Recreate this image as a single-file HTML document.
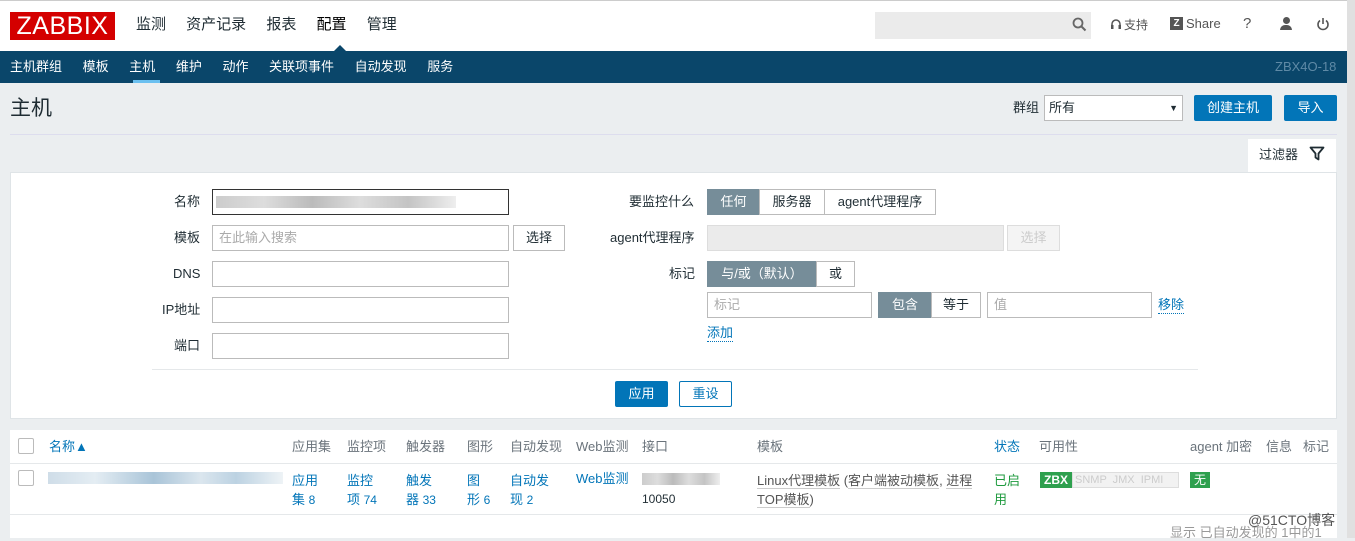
<!DOCTYPE html>
<html><head><meta charset="utf-8"><style>
*{margin:0;padding:0;box-sizing:border-box}
body{width:1355px;height:538px;overflow:hidden;background:#ebeef0;font-family:"Liberation Sans","Noto Sans CJK SC",sans-serif;font-size:13px;line-height:16px;color:#1f2c33;position:relative}
.a{position:absolute;white-space:nowrap}
.inp{position:absolute;background:#fff;border:1px solid #bbb;height:26px}
.btn{position:absolute;border:1px solid #bbb;background:#fff;height:26px;text-align:center;line-height:24px}
.blue{background:#0275b8;color:#fff;border:1px solid #0275b8;border-radius:2px;text-align:center;position:absolute;height:26px;line-height:24px}
.seg{position:absolute;height:26px;line-height:24px;text-align:center;border:1px solid #bbb;background:#fff}
.on{background:#768d99;color:#fff;border-color:#768d99}
.lnk{color:#0275b8}
.th{color:#6a737b}
.blur{position:absolute;height:12px;background:linear-gradient(90deg,#ccc,#ddd 20%,#bbb 40%,#ddd 60%,#c4c4c4 80%,#eee)}
</style></head><body>
<div class="a" style="left:0;top:0;width:1347px;height:51px;background:#fff;border-top:1px solid #ccc"></div>
<div class="a" style="left:1347px;top:0;width:8px;height:538px;background:#e0e0e0"></div>
<div class="a" style="left:10px;top:12px;width:105px;height:28px;background:#d40000;color:#fff;font-size:25px;line-height:28px;text-align:center;letter-spacing:0.5px;font-weight:300">ZABBIX</div>
<div class="a" style="left:136px;top:16px;font-size:15px;line-height:18px;color:#1f2c33;word-spacing:16px">监测 资产记录 报表 <span style="color:#000">配置</span> 管理</div>
<div class="a" style="left:875px;top:12px;width:216px;height:27px;background:#ebebeb"></div>
<svg class="a" style="left:1072px;top:17px" width="15" height="15" viewBox="0 0 15 15"><circle cx="6" cy="6" r="4.5" fill="none" stroke="#666" stroke-width="1.8"/><path d="M9.5 9.5L13.5 13.5" stroke="#666" stroke-width="2"/></svg>
<svg class="a" style="left:1110px;top:18px" width="12" height="12" viewBox="0 0 12 12"><path d="M2 8V6a4 4 0 0 1 8 0v2" fill="none" stroke="#555" stroke-width="1.5"/><rect x="1" y="7" width="2.5" height="4" fill="#555"/><rect x="8.5" y="7" width="2.5" height="4" fill="#555"/></svg>
<div class="a" style="left:1124px;top:17px;font-size:12px;color:#555">支持</div>
<div class="a" style="left:1170px;top:17px;width:13px;height:13px;background:#555;color:#fff;font-size:10px;text-align:center;line-height:13px;font-weight:bold">Z</div>
<div class="a" style="left:1186px;top:16px;font-size:13px;color:#555">Share</div>
<div class="a" style="left:1243px;top:16px;font-size:15px;color:#555">?</div>
<div class="a" style="left:1280px;top:17px;width:12px;height:14px"><div style="width:7px;height:7px;border-radius:50%;background:#555;margin:0 auto"></div><div style="width:12px;height:5px;background:#555;border-radius:5px 5px 0 0;margin-top:1px"></div></div>
<svg class="a" style="left:1316px;top:17px" width="14" height="14" viewBox="0 0 14 14"><path d="M4 3.5A5 5 0 1 0 10 3.5" fill="none" stroke="#555" stroke-width="1.6"/><path d="M7 1V7" stroke="#555" stroke-width="1.6"/></svg>
<div class="a" style="left:0;top:51px;width:1347px;height:32px;background:#0a466a"></div>
<div class="a" style="left:333px;top:45px;width:0;height:0;border-left:7px solid transparent;border-right:7px solid transparent;border-bottom:7px solid #0a466a"></div>
<div class="a" style="left:10px;top:59px;color:#fff;font-size:13px;word-spacing:17px">主机群组 模板 主机 维护 动作 关联项事件 自动发现 服务</div>
<div class="a" style="left:133px;top:80px;width:27px;height:3px;background:#6bc0f0"></div>
<div class="a" style="left:1275px;top:59px;color:#5f8aa6;font-size:13px">ZBX4O-18</div>
<div class="a" style="left:10px;top:96px;font-size:21px;line-height:26px;color:#1f2c33">主机</div>
<div class="a" style="left:1013px;top:100px">群组</div>
<div class="inp" style="left:1044px;top:95px;width:139px;height:26px;padding:4px 4px">所有<span style="float:right;font-size:9px">▼</span></div>
<div class="blue" style="left:1194px;top:95px;width:78px">创建主机</div>
<div class="blue" style="left:1284px;top:95px;width:53px">导入</div>
<div class="a" style="left:10px;top:134px;width:1327px;height:1px;background:#dde"></div>
<div class="a" style="left:1248px;top:139px;width:88px;height:34px;background:#fff;padding:8px 11px;font-size:13px">过滤器</div>
<svg class="a" style="left:1309px;top:146px" width="16" height="15" viewBox="0 0 16 15"><path d="M1.5 1.5H14.5L9.5 7.5V13.5L6.5 11.5V7.5Z" fill="none" stroke="#1f2c33" stroke-width="1.8" stroke-linejoin="round"/></svg>
<div class="a" style="left:10px;top:172px;width:1327px;height:247px;background:#fff;border:1px solid #dfe4e7"></div>
<div class="a" style="left:174px;top:194px">名称</div>
<div class="inp" style="left:212px;top:189px;width:297px;border-color:#333"></div>
<div class="blur" style="left:216px;top:196px;width:240px"></div>
<div class="a" style="left:174px;top:230px">模板</div>
<div class="inp" style="left:212px;top:225px;width:297px;color:#aaa;padding:4px 6px">在此输入搜索</div>
<div class="btn" style="left:513px;top:225px;width:52px">选择</div>
<div class="a" style="left:173px;top:266px">DNS</div>
<div class="inp" style="left:212px;top:261px;width:297px"></div>
<div class="a" style="left:162px;top:302px">IP地址</div>
<div class="inp" style="left:212px;top:297px;width:297px"></div>
<div class="a" style="left:174px;top:338px">端口</div>
<div class="inp" style="left:212px;top:333px;width:297px"></div>
<div class="a" style="left:629px;top:194px">要监控什么</div>
<div class="seg on" style="left:707px;top:189px;width:53px">任何</div>
<div class="seg" style="left:759px;top:189px;width:66px">服务器</div>
<div class="seg" style="left:824px;top:189px;width:112px">agent代理程序</div>
<div class="a" style="left:610px;top:230px">agent代理程序</div>
<div class="inp" style="left:707px;top:225px;width:297px;background:#ebebeb;border-color:#ddd"></div>
<div class="btn" style="left:1007px;top:225px;width:53px;color:#ccc;background:#f4f4f4;border-color:#ddd">选择</div>
<div class="a" style="left:669px;top:266px">标记</div>
<div class="seg on" style="left:707px;top:261px;width:110px">与/或（默认）</div>
<div class="seg" style="left:816px;top:261px;width:39px">或</div>
<div class="inp" style="left:707px;top:292px;width:165px;color:#aaa;padding:4px 6px">标记</div>
<div class="seg on" style="left:878px;top:292px;width:54px">包含</div>
<div class="seg" style="left:931px;top:292px;width:50px">等于</div>
<div class="inp" style="left:987px;top:292px;width:165px;color:#aaa;padding:4px 6px">值</div>
<div class="a lnk" style="left:1158px;top:297px;border-bottom:1px dotted #0275b8">移除</div>
<div class="a lnk" style="left:707px;top:325px;border-bottom:1px dotted #0275b8">添加</div>
<div class="a" style="left:152px;top:369px;width:1046px;height:1px;background:#e5e8ea"></div>
<div class="blue" style="left:615px;top:381px;width:53px">应用</div>
<div class="btn" style="left:679px;top:381px;width:53px;border-color:#0275b8;color:#0275b8;border-radius:2px">重设</div>
<div class="a" style="left:10px;top:430px;width:1327px;height:108px;background:#fff"></div>
<div class="a" style="left:10px;top:463px;width:1327px;height:1px;background:#e5e8ea"></div>
<div class="a" style="left:10px;top:514px;width:1327px;height:1px;background:#e5e8ea"></div>
<div class="a" style="left:18px;top:438px;width:16px;height:16px;border:1px solid #bbb;border-radius:2px"></div>
<div class="a" style="left:18px;top:470px;width:16px;height:16px;border:1px solid #bbb;border-radius:2px"></div>
<div class="a lnk" style="left:49px;top:439px">名称▲</div>
<div class="a th" style="left:292px;top:439px">应用集</div>
<div class="a th" style="left:347px;top:439px">监控项</div>
<div class="a th" style="left:406px;top:439px">触发器</div>
<div class="a th" style="left:467px;top:439px">图形</div>
<div class="a th" style="left:510px;top:439px">自动发现</div>
<div class="a th" style="left:576px;top:439px">Web监测</div>
<div class="a th" style="left:642px;top:439px">接口</div>
<div class="a th" style="left:757px;top:439px">模板</div>
<div class="a lnk" style="left:994px;top:439px">状态</div>
<div class="a th" style="left:1039px;top:439px">可用性</div>
<div class="a th" style="left:1190px;top:439px">agent 加密</div>
<div class="a th" style="left:1266px;top:439px">信息</div>
<div class="a th" style="left:1303px;top:439px">标记</div>
<div class="blur" style="left:48px;top:472px;width:235px;background:linear-gradient(90deg,#cfdde8,#e4edf3 20%,#a9c4d8 45%,#dbe6ee 65%,#bcd2e2 80%,#eef3f6)"></div>
<div class="a lnk" style="left:292px;top:471px;line-height:19px">应用<br>集 <span style="font-size:12px">8</span></div>
<div class="a lnk" style="left:347px;top:471px;line-height:19px">监控<br>项 <span style="font-size:12px">74</span></div>
<div class="a lnk" style="left:406px;top:471px;line-height:19px">触发<br>器 <span style="font-size:12px">33</span></div>
<div class="a lnk" style="left:467px;top:471px;line-height:19px">图<br>形 <span style="font-size:12px">6</span></div>
<div class="a lnk" style="left:510px;top:471px;line-height:19px">自动发<br>现 <span style="font-size:12px">2</span></div>
<div class="a lnk" style="left:576px;top:471px">Web监测</div>
<div class="blur" style="left:642px;top:473px;width:78px"></div>
<div class="a" style="left:642px;top:491px;font-size:12px">10050</div>
<div class="a" style="left:757px;top:471px;line-height:19px;color:#555"><span style="border-bottom:1px solid #ccc">Linux代理模板</span> (<span style="border-bottom:1px solid #ccc">客户端被动模板</span>, <span style="border-bottom:1px solid #ccc">进程</span><br><span style="border-bottom:1px solid #ccc">TOP模板</span>)</div>
<div class="a" style="left:994px;top:471px;line-height:19px;color:#1e9a3e">已启<br>用</div>
<div class="a" style="left:1040px;top:472px;width:32px;height:16px;background:#2ea04e;color:#fff;font-size:12px;text-align:center;line-height:16px;font-weight:bold">ZBX</div>
<div class="a" style="left:1072px;top:472px;width:107px;height:16px;background:#f2f2f2;border:1px solid #ddd;color:#ccc;font-size:11px;line-height:14px;word-spacing:3px;padding-left:2px">SNMP JMX IPMI</div>
<div class="a" style="left:1190px;top:472px;width:20px;height:16px;background:#2ea04e;color:#fff;font-size:12px;text-align:center;line-height:16px">无</div>
<div class="a" style="left:1170px;top:525px;color:#999">显示 已自动发现的 1中的1</div>
<div class="a" style="left:1248px;top:512px;color:#555;font-size:14px">@51CTO博客</div>
</body></html>
